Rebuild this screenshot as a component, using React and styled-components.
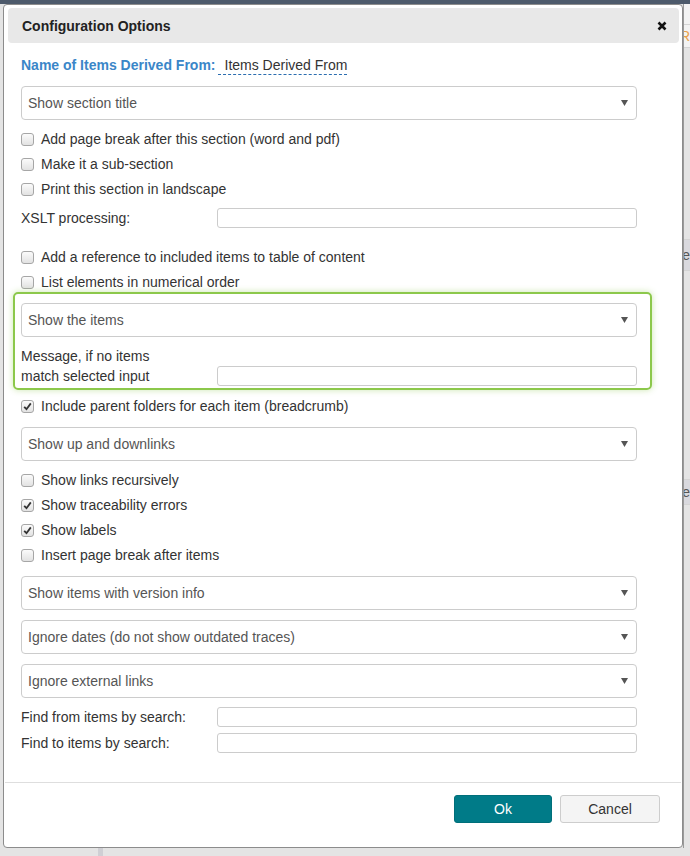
import styled, { createGlobalStyle } from 'styled-components';

const GlobalStyle = createGlobalStyle`
	html, body {
		margin: 0;
		padding: 0;
		background: #e4e4e4;
	}
	body {
		font-family: "Liberation Sans", Arial, sans-serif;
		font-size: 14px;
		color: #333;
	}
`;

const Page = styled.div`
	width: 690px;
	height: 856px;
	overflow: hidden;
	display: flex;
	flex-direction: column;
	background: #e4e4e4;
`;

const TopBand = styled.div`
	height: 4px;
	background: #4d5a6b;
	flex-shrink: 0;
`;

const Stage = styled.div`
	display: flex;
	align-items: flex-start;
`;

const Gutter = styled.div`
	width: 3px;
	flex-shrink: 0;
`;

const SideStrip = styled.div`
	flex: 1;
	display: flex;
	flex-direction: column;
	overflow: hidden;
	border-left: 1px solid #9a9a9a;
	align-self: stretch;
`;

const StripPiece = styled.div`
	height: ${({ $h }) => $h}px;
	background: ${({ $bg }) => $bg || 'transparent'};
	border-top: ${({ $lines }) => ($lines ? '1px solid #d4d4d4' : 'none')};
	border-bottom: ${({ $lines }) => ($lines ? '1px solid #d4d4d4' : 'none')};
	display: flex;
	align-items: center;
	justify-content: flex-end;
	white-space: nowrap;
	font-size: 14px;
	color: ${({ $color }) => $color || '#555'};
`;

const BottomStrip = styled.div`
	flex: 1;
	display: flex;
	padding-left: 98px;
`;

const BottomBar = styled.div`
	width: 5px;
	background: #cfcfd4;
`;

const Dialog = styled.div`
	width: 680px;
	box-sizing: border-box;
	background: #fff;
	border: 1px solid #8c8c8c;
	border-radius: 4px;
	display: flex;
	flex-direction: column;
	flex-shrink: 0;
`;

const Header = styled.div`
	margin: 3px 3px 0 4px;
	height: 35px;
	box-sizing: border-box;
	background: #e8e8e8;
	border-radius: 4px;
	display: flex;
	align-items: center;
	justify-content: space-between;
	padding: 0 12px 0 14px;
`;

const Title = styled.h4`
	margin: 0;
	font-size: 14px;
	font-weight: bold;
	color: #222;
`;

const Close = styled.button`
	border: none;
	background: none;
	padding: 0;
	display: flex;
	align-items: center;
	cursor: pointer;
`;

const Body = styled.div`
	padding: 0 45px 29px 17px;
	display: flex;
	flex-direction: column;
`;

const Line = styled.div`
	margin-top: ${({ $mt }) => $mt}px;
	display: flex;
	align-items: center;
	min-height: 20px;
`;

const NameLabel = styled.span`
	font-weight: bold;
	color: #3a86c8;
`;

const Editable = styled.span`
	margin-left: 2px;
	padding-left: 7px;
	border-bottom: 1px dashed #2a6db0;
	line-height: 18px;
	color: #333;
`;

const SelectBox = styled.div`
	margin-top: ${({ $mt }) => $mt}px;
	height: 34px;
	box-sizing: border-box;
	border: 1px solid #ccc;
	border-radius: 4px;
	background: #fff;
	display: flex;
	align-items: center;
	justify-content: space-between;
	padding: 0 8px 0 6px;
	color: #555;
`;

const CheckRow = styled.label`
	margin-top: ${({ $mt }) => $mt}px;
	height: 20px;
	display: flex;
	align-items: center;
	gap: 7px;
	color: #333;
`;

const Box = styled.span`
	width: 13px;
	height: 13px;
	box-sizing: border-box;
	border: 1px solid #a6a6a6;
	border-radius: 3px;
	background: linear-gradient(#fbfbfb, #e2e2e2);
	display: flex;
	align-items: center;
	justify-content: center;
	flex-shrink: 0;
`;

const FieldRow = styled.div`
	margin-top: ${({ $mt }) => $mt}px;
	display: flex;
	align-items: ${({ $bottom }) => ($bottom ? 'flex-end' : 'center')};
`;

const FieldLabel = styled.div`
	width: 196px;
	line-height: 20px;
	color: #333;
	flex-shrink: 0;
`;

const TextInput = styled.input`
	flex: 1;
	height: 20px;
	box-sizing: border-box;
	border: 1px solid #ccc;
	border-radius: 3px;
	padding: 0 4px;
	font: inherit;
	outline: none;
`;

const Highlight = styled.div`
	margin: 0 -15px 0 -8px;
	padding: 9px 13px 2px 6px;
	border: 2px solid #8cc84b;
	border-radius: 5px;
	box-shadow: 0 0 6px rgba(140, 200, 75, 0.45);
	display: flex;
	flex-direction: column;
`;

const Footer = styled.div`
	margin: 0 1px;
	border-top: 1px solid #dedede;
	padding: 12px 21px 24px 0;
	display: flex;
	justify-content: flex-end;
	gap: 8px;
`;

const Button = styled.button`
	width: ${({ $w }) => $w}px;
	height: 28px;
	border-radius: 3px;
	font-family: "Liberation Sans", Arial, sans-serif;
	font-size: 14px;
	cursor: pointer;
	background: ${({ $primary }) => ($primary ? '#007b88' : '#f4f4f4')};
	color: ${({ $primary }) => ($primary ? '#fff' : '#333')};
	border: 1px solid ${({ $primary }) => ($primary ? '#006f7a' : '#cdcdcd')};
`;

const Caret = () => (
	<svg width="7" height="6" viewBox="0 0 7 6">
		<path d="M0 0 H7 L3.5 6 Z" fill="#555" />
	</svg>
);

const Check = ({ checked, label, mt }) => (
	<CheckRow $mt={mt}>
		<Box>
			{checked && (
				<svg width="9" height="9" viewBox="0 0 9 9">
					<path
						d="M1.2 4.8 L3.5 7.2 L7.8 1.4"
						fill="none"
						stroke="#333"
						strokeWidth="1.8"
					/>
				</svg>
			)}
		</Box>
		{label}
	</CheckRow>
);

const Select = ({ value, mt }) => (
	<SelectBox $mt={mt}>
		<span>{value}</span>
		<Caret />
	</SelectBox>
);

export default function App() {
	return (
		<Page>
			<GlobalStyle />
			<TopBand />
			<Stage>
				<Gutter />
				<Dialog>
					<Header>
						<Title>Configuration Options</Title>
						<Close aria-label="close">
							<svg width="10" height="10" viewBox="0 0 10 10">
								<path
									d="M1.5 1.5 L8.5 8.5 M8.5 1.5 L1.5 8.5"
									stroke="#111"
									strokeWidth="2.6"
								/>
							</svg>
						</Close>
					</Header>
					<Body>
						<Line $mt={12}>
							<NameLabel>Name of Items Derived From:</NameLabel>
							<Editable>Items Derived From</Editable>
						</Line>
						<Select mt={11} value="Show section title" />
						<Check mt={9} label="Add page break after this section (word and pdf)" />
						<Check mt={5} label="Make it a sub-section" />
						<Check mt={5} label="Print this section in landscape" />
						<FieldRow $mt={9}>
							<FieldLabel>XSLT processing:</FieldLabel>
							<TextInput />
						</FieldRow>
						<Check mt={19} label="Add a reference to included items to table of content" />
						<Check mt={5} label="List elements in numerical order" />
						<Highlight>
							<Select mt={0} value="Show the items" />
							<FieldRow $mt={9} $bottom>
								<FieldLabel>
									Message, if no items
									<br />
									match selected input
								</FieldLabel>
								<TextInput />
							</FieldRow>
						</Highlight>
						<Check mt={6} checked label="Include parent folders for each item (breadcrumb)" />
						<Select mt={11} value="Show up and downlinks" />
						<Check mt={9} label="Show links recursively" />
						<Check mt={5} checked label="Show traceability errors" />
						<Check mt={5} checked label="Show labels" />
						<Check mt={5} label="Insert page break after items" />
						<Select mt={11} value="Show items with version info" />
						<Select mt={10} value="Ignore dates (do not show outdated traces)" />
						<Select mt={10} value="Ignore external links" />
						<FieldRow $mt={9}>
							<FieldLabel>Find from items by search:</FieldLabel>
							<TextInput />
						</FieldRow>
						<FieldRow $mt={6}>
							<FieldLabel>Find to items by search:</FieldLabel>
							<TextInput />
						</FieldRow>
					</Body>
					<Footer>
						<Button $primary $w={98}>Ok</Button>
						<Button $w={100}>Cancel</Button>
					</Footer>
				</Dialog>
				<SideStrip>
					<StripPiece $h={20} $bg="#f3f3f3" />
					<StripPiece $h={22} $lines $bg="#f3f3f3" $color="#e8a04a">
						R
					</StripPiece>
					<StripPiece $h={191} />
					<StripPiece $h={30} $lines $bg="#d9d9de">
						te
					</StripPiece>
					<StripPiece $h={208} />
					<StripPiece $h={24} $lines $bg="#d9d9de">
						<span style={{ color: '#d9962f' }}>l</span>e
					</StripPiece>
				</SideStrip>
			</Stage>
			<BottomStrip>
				<BottomBar />
			</BottomStrip>
		</Page>
	);
}
